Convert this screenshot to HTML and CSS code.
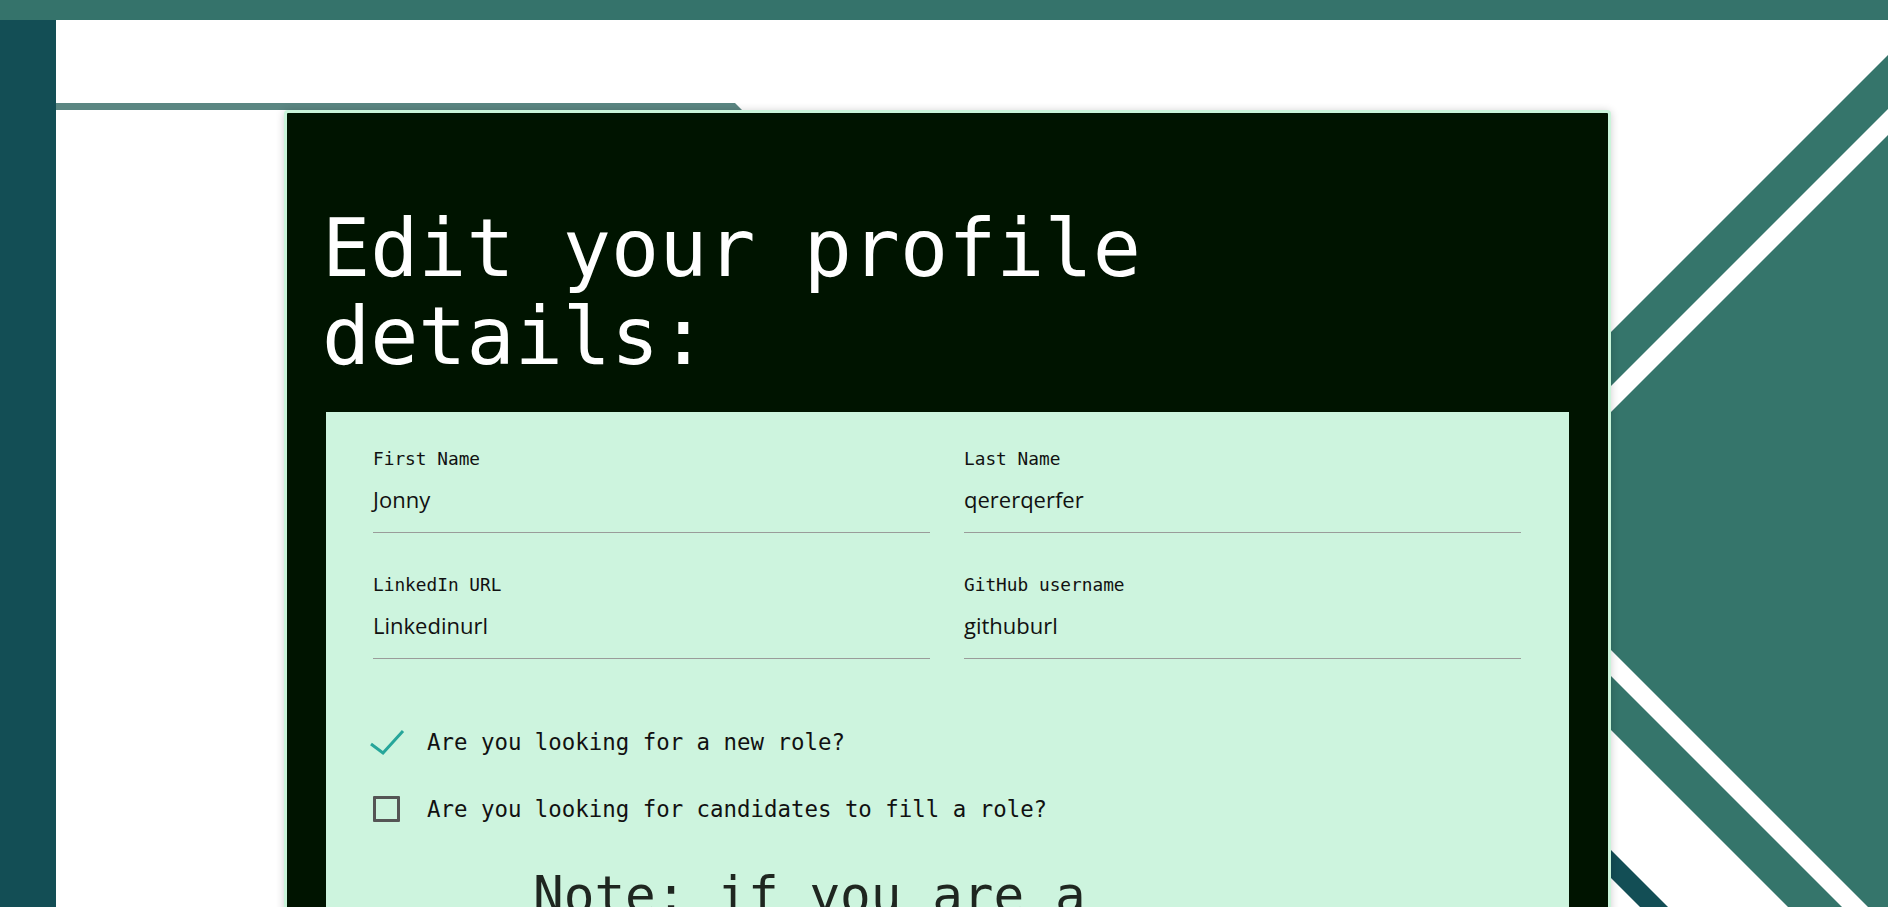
FILE: index.html
```html
<!DOCTYPE html>
<html lang="en">
<head>
<meta charset="utf-8">
<title>Edit profile</title>
<link rel="stylesheet" href="styles.css">
</head>
<body>
<svg class="backdrop" viewBox="0 0 1888 907" width="1888" height="907" aria-hidden="true">
  <polygon class="teal" points="1412,531 1943,0 2200,0 2200,907 1788,907"/>
  <polygon class="white" points="1466,531 1997,0 2200,0 2200,907 1842,907"/>
  <polygon class="teal" points="1492,531 2023,0 2200,0 2200,907 1868,907"/>
  <polygon class="deep" points="1480,719 1480,747 1640,907 1668,907"/>
  <polygon class="strip" points="55,103 735,103 742,110 55,110"/>
</svg>
<div class="page">
  <header class="topbar"></header>
  <div class="layout">
    <aside class="sidebar"></aside>
    <main class="main">
      <section class="card">
        <h1 class="title">Edit your profile details:</h1>
        <form class="panel">
          <div class="fields">
            <div class="field">
              <span class="label">First Name</span>
              <div class="value">Jonny</div>
            </div>
            <div class="field">
              <span class="label">Last Name</span>
              <div class="value">qererqerfer</div>
            </div>
            <div class="field">
              <span class="label">LinkedIn URL</span>
              <div class="value">Linkedinurl</div>
            </div>
            <div class="field">
              <span class="label">GitHub username</span>
              <div class="value">githuburl</div>
            </div>
          </div>
          <div class="checks">
            <div class="check">
              <span class="box box-checked">
                <svg width="28" height="28" viewBox="0 0 28 28" overflow="visible"><path d="M-2 16 L10 25 L30 3" fill="none" stroke="#26a69a" stroke-width="3"/></svg>
              </span>
              <span class="check-text">Are you looking for a new role?</span>
            </div>
            <div class="check">
              <span class="box"><span class="square"></span></span>
              <span class="check-text">Are you looking for candidates to fill a role?</span>
            </div>
          </div>
          <p class="note">Note: if you are a recruiter, please tell us which roles you are hiring for.</p>
        </form>
      </section>
    </main>
  </div>
</div>
</body>
</html>
```
FILE: styles.css
```css
html, body {
  margin: 0;
  padding: 0;
  height: 907px;
  overflow: hidden;
  background: #ffffff;
}

.backdrop {
  position: absolute;
  left: 0;
  top: 0;
  z-index: 0;
}
.backdrop .teal { fill: #35756b; }
.backdrop .white { fill: #ffffff; }
.backdrop .deep { fill: #134e55; }
.backdrop .strip { fill: #5b8682; }

.page {
  position: relative;
  z-index: 1;
  display: flex;
  flex-direction: column;
  height: 907px;
}

.topbar {
  height: 20px;
  background: #35736b;
  flex: none;
}

.layout {
  display: flex;
  flex: 1;
  min-height: 0;
}

.sidebar {
  width: 56px;
  flex: none;
  background: #134e55;
}

.main {
  flex: 1;
  overflow: hidden;
  padding: 90px 0 0 228px;
}

.card {
  box-sizing: border-box;
  width: 1327px;
  background: #001400;
  border: 3px solid #c9f5da;
  border-radius: 4px;
  box-shadow: 0 1px 8px rgba(0, 0, 0, 0.2);
  padding: 92px 39px 40px 39px;
}

.title {
  margin: 0 0 31px -4px;
  font-family: "DejaVu Sans Mono", monospace;
  font-weight: normal;
  font-size: 80px;
  line-height: 88px;
  color: #ffffff;
}

.panel {
  background: #cdf4de;
  padding: 36px 48px 60px 47px;
}

.fields {
  display: grid;
  grid-template-columns: 1fr 1fr;
  column-gap: 34px;
  row-gap: 41px;
}

.field {
  display: flex;
  flex-direction: column;
}

.label {
  font-family: "DejaVu Sans Mono", monospace;
  font-size: 17.8px;
  line-height: 22px;
  color: #111111;
}

.value {
  font-family: "Open Sans", sans-serif;
  font-size: 22px;
  line-height: 24px;
  color: #111111;
  margin-top: 17px;
  padding-bottom: 21px;
  border-bottom: 1px solid #9a9c9a;
}

.checks {
  margin-top: 69px;
  display: flex;
  flex-direction: column;
  gap: 39px;
}

.check {
  display: flex;
  align-items: center;
  height: 28px;
}

.box {
  width: 28px;
  height: 28px;
  margin-right: 26px;
  flex: none;
  display: flex;
  align-items: center;
}

.box svg {
  display: block;
}

.square {
  box-sizing: border-box;
  width: 27px;
  height: 26px;
  border: 3px solid #555555;
  border-radius: 1px;
}

.check-text {
  font-family: "DejaVu Sans Mono", monospace;
  font-size: 22.4px;
  line-height: 28px;
  color: #111111;
}

.note {
  margin: 42px 160px 0 160px;
  font-family: "DejaVu Sans Mono", monospace;
  font-size: 51px;
  line-height: 61px;
  color: #1f2620;
}
```
